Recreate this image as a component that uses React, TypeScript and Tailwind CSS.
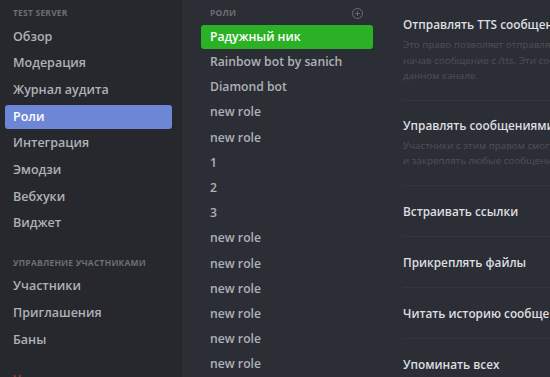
import { Plus } from "lucide-react";

const font = { fontFamily: '"Open Sans", "Noto Sans", sans-serif' };

const mainNav = ["Обзор", "Модерация", "Журнал аудита", "Роли", "Интеграция", "Эмодзи", "Вебхуки", "Виджет"];
const memberNav = ["Участники", "Приглашения", "Баны"];

const roles = [
  "Радужный ник",
  "Rainbow bot by sanich",
  "Diamond bot",
  "new role",
  "new role",
  "1",
  "2",
  "3",
  "new role",
  "new role",
  "new role",
  "new role",
  "new role",
  "new role",
];

const perms = [
  {
    title: "Отправлять TTS сообщения",
    desc: [
      "Это право позволяет отправлять сообщения преобразования текста в речь,",
      "начав сообщение с /tts. Эти сообщения могут быть услышаны всеми в",
      "данном канале.",
    ],
  },
  {
    title: "Управлять сообщениями",
    desc: ["Участники с этим правом смогут удалять сообщения других участников", "и закреплять любые сообщения."],
  },
  { title: "Встраивать ссылки" },
  { title: "Прикреплять файлы" },
  { title: "Читать историю сообщений" },
  { title: "Упоминать всех" },
];

function NavItem({ label, active }: { label: string; active?: boolean }) {
  return (
    <div
      className={`flex h-[24px] items-center rounded-[3px] px-[8px] text-[12.5px] font-semibold ${
        active ? "bg-[#6d87d6] text-white" : "text-[#aeb1b6]"
      }`}
    >
      {label}
    </div>
  );
}

export default function App() {
  return (
    <div className="flex h-[377px] w-[550px] overflow-hidden bg-[#2c2e35]" style={font}>
      {/* settings sidebar */}
      <aside className="flex w-[182px] shrink-0 flex-col bg-[#26282e] pl-[5px] pr-[10px] pt-[7px]">
        <div className="h-[12px] px-[8px] text-[8.5px] font-bold uppercase leading-[12px] tracking-[0.2px] text-[#6b6e74]">
          Test Server
        </div>
        <div className="mt-[6px] flex flex-col gap-[2.7px]">
          {mainNav.map((item) => (
            <NavItem key={item} label={item} active={item === "Роли"} />
          ))}
        </div>
        <div className="mx-[8px] mt-[9px] h-px bg-[#383a41]" />
        <div className="mt-[12px] h-[12px] px-[8px] text-[8.5px] font-bold uppercase leading-[12px] tracking-[0.2px] text-[#6b6e74]">
          Управление участниками
        </div>
        <div className="mt-[6px] flex flex-col gap-[2.7px]">
          {memberNav.map((item) => (
            <NavItem key={item} label={item} />
          ))}
        </div>
        <div className="mx-[8px] mt-[8px] h-px bg-[#383a41]" />
        <div className="mt-[8px] px-[8px] text-[12.5px] font-semibold leading-[24px] text-[#a0353a]">
          Удалить сервер
        </div>
      </aside>

      {/* roles list */}
      <section className="ml-[19px] flex w-[172px] shrink-0 flex-col pt-[7px]">
        <div className="flex h-[12px] items-center justify-between pl-[9px] pr-[10px]">
          <span className="text-[8.5px] font-bold uppercase tracking-[0.2px] text-[#6b6e74]">Роли</span>
          <span className="flex h-[11px] w-[11px] items-center justify-center rounded-full border border-[#6b6e74]">
            <Plus className="h-[7px] w-[7px] text-[#6b6e74]" strokeWidth={3} />
          </span>
        </div>
        <div className="mt-[6px] flex flex-col gap-[1.2px]">
          {roles.map((role, i) => (
            <div
              key={i}
              className={`flex h-[24px] items-center rounded-[3px] px-[9px] text-[12.2px] font-semibold ${
                i === 0 ? "bg-[#2bb126] text-white" : "text-[#aeb1b6]"
              }`}
            >
              {role}
            </div>
          ))}
        </div>
      </section>

      {/* permissions */}
      <section className="ml-[30px] flex min-w-0 flex-1 flex-col pt-[14px]">
        {perms.map((p, i) => (
          <div
            key={p.title}
            className={`flex flex-col border-b border-[#34363d] pb-[16px] ${
              i === 0 ? "pt-[1px]" : i === 1 ? "pt-[15px]" : "pt-[16px]"
            }`}
          >
            <div className="whitespace-nowrap text-[11.8px] font-semibold leading-[18px] text-[#dcdee1]">{p.title}</div>
            {p.desc ? (
              <div className="mt-[4px] flex flex-col whitespace-nowrap text-[9.8px] leading-[15.5px] text-[#4e5158]">
                {p.desc.map((line) => (
                  <span key={line}>{line}</span>
                ))}
              </div>
            ) : null}
          </div>
        ))}
      </section>
    </div>
  );
}
